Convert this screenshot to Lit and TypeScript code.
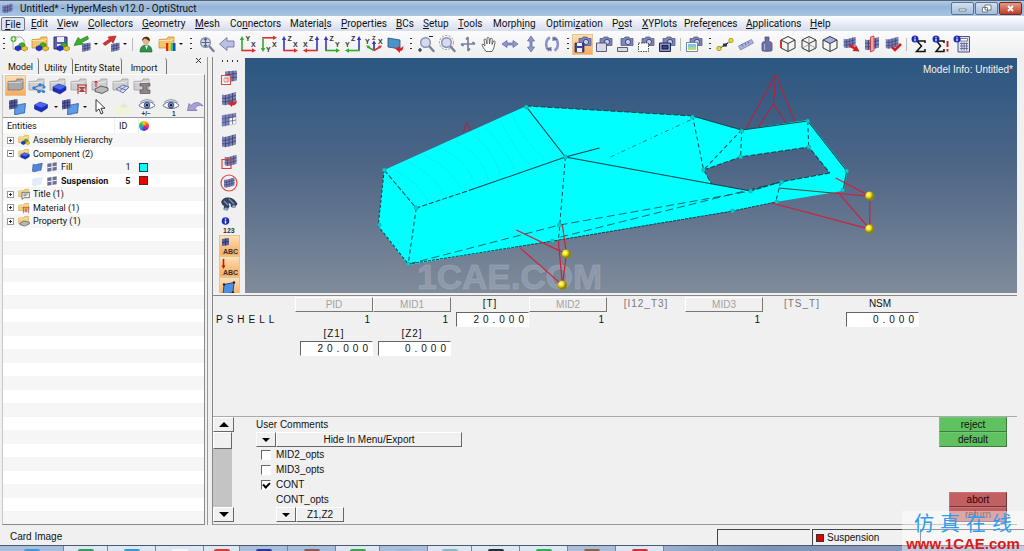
import { LitElement, html, css, svg, nothing } from "lit";
import { customElement, property, state } from "lit/decorators.js";
import { classMap } from "lit/directives/class-map.js";

/* ---------- icon building blocks, all on an 18 x 18 canvas ---------- */

const folder = (fill: string, edge: string) => svg`
  <path d="M1 4.500 9 4 10 2h6v9.500L13 13H1z" fill=${fill} stroke=${edge} stroke-width=".7"/>
  <path d="M1 5.500h12l3-2" fill="none" stroke="#fff" stroke-opacity=".6" stroke-width=".8"/>`;
const blocks = svg`
  <path d="M9 9l3-1.500L15 9v2l-3 1.500L9 11z" fill="#3fae2a" stroke="#1c6a12" stroke-width=".5"/>
  <path d="M5 12l3-1.500 3 1.500v2.500L8 16l-3-1.500z" fill="#1f36d6" stroke="#0a1578" stroke-width=".5"/>
  <path d="M11.500 12.500l3-1.500 3 1.500v2l-3 1.500-3-1.500z" fill="#e8c52a" stroke="#6a5a10" stroke-width=".5"/>`;
const cubeBlue = svg`
  <path d="M4 10l5.500-3L17 9.500v3.500l-6 4-7-3z" fill="#1a2fc0" stroke="#0b1670" stroke-width=".5"/>
  <path d="M4 10l5.500-3L17 9.500l-6 3.300z" fill="#4c66ee"/>`;
const mesh = svg`
  <path d="M2 4.500c4 1.500 9-1.500 14-2.500v10.500c-5 1-10 4-14 2z" fill="#7c83b8"/>
  <path d="M5.500 5v10M9 4v10.500M12.500 3v10.500M2 8c4 1.500 9-1.500 14-2.500M2 11.500C6 13 11 10 16 9" fill="none" stroke="#3a3e6c" stroke-width=".8"/>`;
const smallMesh = svg`
  <path d="M9 9l8.500-1.500v7.500L9 17z" fill="#7c83b8"/>
  <path d="M11.800 8.600v7.700M14.700 8v7.600M9 11.500l8.500-1.600M9 14.200l8.500-1.700" fill="none" stroke="#3a3e6c" stroke-width=".7"/>`;
const camera = svg`
  <path d="M5 3.500h3l1-1.500h4l1 1.500h3v7H5z" fill="#7f86b8" stroke="#4b5082" stroke-width=".7"/>
  <circle cx="12" cy="7" r="2.600" fill="#c9cfee" stroke="#2f3566" stroke-width=".8"/>`;
const lens = svg`
  <path d="M12 11l4.500 5" stroke="#7b7f9c" stroke-width="2.400" stroke-linecap="round"/>
  <circle cx="8.500" cy="7.500" r="4.800" fill="#d4daf0" stroke="#8a8fae" stroke-width="1.400"/>`;
const info = svg`
  <circle cx="4" cy="4" r="3.500" fill="#1b2bb4"/>
  <path d="M4 1.800v1M4 3.600v2.600" stroke="#fff" stroke-width="1.200"/>`;
const sheet = svg`<path d="M3 5c3 1.500 8-1 14-1.500L15 14c-5 .5-10 3-13 1.500z" fill="#4f86d8" stroke="#1f3f86" stroke-width=".7"/>`;
const cubeWire = svg`<path d="M9 1.500l7 3.500v8l-7 3.500L2 13V5zM2 5l7 3.500L16 5M9 8.500v8" fill="none" stroke="#333" stroke-width="1"/>`;
const eye = svg`
  <path d="M1 7.500C4 2.500 14 2.500 17 7.500 13 11.500 5 11.500 1 7.500z" fill="#fff" stroke="#5c6484" stroke-width="1"/>
  <circle cx="9" cy="7.200" r="2.900" fill="#6f8fc4" stroke="#2a3a66" stroke-width=".7"/><circle cx="9" cy="7.200" r="1.100" fill="#111"/>
  <path d="M2 4.500C6 .8 12 .8 16 4.500" fill="none" stroke="#6a7190" stroke-width=".8"/>`;
const glyph = (x: number, y: number, t: string, size = 7) =>
  svg`<text x=${x} y=${y} font-size=${size} font-weight="bold" fill="#333" font-family="Liberation Sans, sans-serif">${t}</text>`;
const G = "#2faa35", R = "#dd2f2f", B = "#3338b8";
/* upright axis on the left or right edge, second axis along the bottom */
const axes = (vert: string, horiz: string, a: string, b: string, flip = false) => svg`
  <g transform=${flip ? "translate(18 0) scale(-1 1)" : ""}>
    <path d="M3 15.500V4" stroke=${vert} stroke-width="1.600"/><path d="M.8 5L3 1l2.200 4z" fill=${vert}/>
    <path d="M2.300 15.500H14" stroke=${horiz} stroke-width="1.600"/><path d="M13 13.300l4 2.200-4 2.200z" fill=${horiz}/>
  </g>${flip ? svg`${glyph(1, 12, b)}${glyph(7, 6, a)}` : svg`${glyph(6.5, 6, a)}${glyph(12, 12, b)}`}`;

const ICONS: Record<string, unknown> = {
  app: svg`${mesh}`,
  newModel: svg`<path d="M3 2h8l3 3v9H3z" fill="#fafafa" stroke="#999" stroke-width=".8"/><circle cx="3.500" cy="4" r="3" fill="#58b843"/><path d="M3.500 2.200v3.600M1.700 4h3.600" stroke="#fff"/>${blocks}`,
  openModel: svg`${folder("#f3c568", "#c08a2a")}${blocks}`,
  saveModel: svg`<path d="M2 2h13v12H2z" fill="#5b62a8" stroke="#30356e"/><path d="M5 2h7v5H5zM5 9h7v5H5z" fill="#eef"/>${blocks}`,
  importFile: svg`${smallMesh}<path d="M14.500 1L7.500 4.500 5 2.500 1 10.500l9.500-1.500L8.500 7.500 15.500 4z" fill="#3fae2a" stroke="#1e7614" stroke-width=".6"/>`,
  exportFile: svg`${smallMesh}<path d="M1 8.500l6.500-4.500L6 2 14 1l-3 7-1.500-2L3 10.500z" fill="#dd3030" stroke="#8c1616" stroke-width=".6"/>`,
  user: svg`<path d="M3 17c0-5 2.500-7 6-7s6 2 6 7z" fill="#2c9448" stroke="#17602b" stroke-width=".6"/><circle cx="9" cy="6" r="3.600" fill="#e2b48a"/><path d="M5 6c0-6 8.500-5.500 8 0-2-.5-4-2.500-5-2.500S6 5 5 6z" fill="#4a2a14"/><path d="M8 10.500l1.500 4 1.500-4z" fill="#fff"/>`,
  colorFolder: svg`${folder("#f3c568", "#c08a2a")}<path d="M8 8h2.500v8H8z" fill="#d22"/><path d="M10.500 8h2.300v8h-2.300z" fill="#ec2"/><path d="M12.800 8H15v8h-2.200z" fill="#2c8"/><path d="M15 8h2.500v8H15z" fill="#24c"/>`,
  fit: svg`${lens}<path d="M8.500 3.500v8M4.500 7.500h8M7 5l1.500-1.500L10 5M7 10l1.500 1.500L10 10" fill="none" stroke="#5c6180" stroke-width="1.100"/>`,
  back: svg`<path d="M1.500 9L9 2.500v3.500h7v6H9v3.500z" fill="#b9c0e4" stroke="#6f77ac" stroke-width=".9"/>`,
  xy: axes(G, R, "Y", "X"),
  xyDown: svg`<path d="M3 3.500V14" stroke=${G} stroke-width="1.600"/><path d="M.8 13L3 17l2.200-4z" fill=${G}/><path d="M2.300 2.800H14" stroke=${R} stroke-width="1.600"/><path d="M13 .6l4 2.200L13 5z" fill=${R}/>${glyph(12, 12, "X")}${glyph(6, 17, "Y")}`,
  xz: axes(B, R, "Z", "X"), xzFlip: axes(B, R, "Z", "X", true),
  yz: axes(B, G, "Z", "Y"), yzFlip: axes(B, G, "Z", "Y", true),
  iso: svg`<path d="M9 15V7" stroke=${B} stroke-width="1.700"/><path d="M6.800 9L9 5.500 11.200 9z" fill=${B}/><path d="M9 15.500l-6-3.500" stroke=${G} stroke-width="1.700"/><path d="M1 10.500l4 .3-2 3z" fill=${G}/><path d="M9 15.500l6-3.500" stroke=${R} stroke-width="1.700"/><path d="M17 10.500l-4 .3 2 3z" fill=${R}/>${glyph(0, 9, "Y", 7)}${glyph(7, 5, "Z", 6)}${glyph(13, 9, "X", 7)}`,
  viewRed: svg`<path d="M2 3l12 2v9L2 12z" fill="#4f92c8" stroke="#22507c" stroke-width=".8"/><path d="M9 13.500l5-2.500v2c3-.5 3-2 3-3 1 4-1 6-3 6v2z" fill="#d82626"/>`,
  zoomPlus: svg`${lens}<path d="M12 1.500h4M1 15h4M3 13v4" stroke="#222" stroke-width="1.200"/>`,
  zoomArea: svg`${lens}<circle cx="8.500" cy="7.500" r="7" fill="none" stroke="#777" stroke-width=".8" stroke-dasharray="2 1.500"/>`,
  cross: svg`<path d="M9 2v14M2 9h14M9 2l-2 2.500M9 16l2-2.500M2 9l2.500 2M16 9l-2.500-2" stroke="#7a7f9c" stroke-width="1.700" fill="none"/>`,
  hand: svg`<path d="M6 16.500C4 13.500 2 11 2 9.500c1.200-1 2.500.8 3 1.500L4 4.500c1.200-1 2 .3 2.400 1.500L7 9V3c1-1.200 2-.4 2.200.5L9.500 9l.8-5.500c1.200-.8 2 0 2 1L12 9.500l1.500-3.500c1.300-.5 1.800.5 1.500 1.500-1 4-1 6.500-3 9z" fill="#fdfdfd" stroke="#555" stroke-width=".9"/>`,
  arrowsH: svg`<path d="M1 9l5-3.500V8h6V5.500L17 9l-5 3.500V10H6v2.500z" fill="#8f97cc" stroke="#666da8" stroke-width=".8"/>`,
  arrowsV: svg`<path d="M9 1l3.500 5H10v6h2.500L9 17l-3.500-5H8V6H5.500z" fill="#8f97cc" stroke="#666da8" stroke-width=".8"/>`,
  rotate: svg`<path d="M7 2.500C2 5 2 13 6.500 15.500M11 2.500c5 2.500 5 10.500.5 13" fill="none" stroke="#8b93c6" stroke-width="2.600"/><path d="M3 13.500l5.500 3V12zM15 4.500l-5.500-3V6z" fill="#666da8"/>`,
  camSave: svg`${camera}<path d="M1 8h9v9H1z" fill="#3c4392" stroke="#23286a" stroke-width=".7"/><path d="M3 8h5v3H3zM3 13h5v4H3z" fill="#eef"/>`,
  camWin: svg`${camera}<path d="M1.500 8h10v8.500h-10z" fill="#d9dbe4" stroke="#4a4e68" stroke-width=".9"/>`,
  camBar: svg`${camera}<path d="M1.500 12.500h10v4h-10z" fill="#d9dbe4" stroke="#4a4e68" stroke-width=".9"/>`,
  camDash: svg`${camera}<path d="M1.500 8h10v8.500h-10z" fill="#fff" stroke="#333" stroke-width=".9" stroke-dasharray="1.500 1"/>`,
  camFrame: svg`${camera}<path d="M1.500 8h11v8.500h-11z" fill="#8d95c6" stroke="#23285a"/><path d="M4 10.500h6v3.500H4z" fill="#3a4394" stroke="#111" stroke-width=".8"/>`,
  camImage: svg`${camera}<path d="M1.500 7.500h11v9h-11z" fill="#fff" stroke="#5a7aa0" stroke-width=".9"/><path d="M3 9h8v3H3z" fill="#7cc4ee"/><path d="M3 12h8v3H3z" fill="#b8dc6a"/>`,
  nodes: svg`<path d="M3 13.500L9 10l5.500-4" stroke="#222" stroke-width="1.200" stroke-dasharray="3 1"/><circle cx="3" cy="13.500" r="2.200" fill="#e6dc2a" stroke="#7d7612" stroke-width=".6"/><circle cx="15" cy="5.500" r="2.200" fill="#e6dc2a" stroke="#7d7612" stroke-width=".6"/><path d="M7 8.500h4v3H7z" fill="#333"/>`,
  ruler: svg`<path d="M1.500 11L14.500 4.500l2 3.500-13 7z" fill="#a9b0dc" stroke="#7a81b6" stroke-width=".8"/><path d="M5 9.500l1 2M8 8l1 2M11 6.500l1 2" stroke="#5a6196" stroke-width=".9"/>`,
  mass: svg`<path d="M7 2h4v2.500L10.500 6C14 7 14 8 14 9v6.500c0 1-10 1-10 0V9c0-1 0-2 3.500-3L7 4.500z" fill="#6a70a6" stroke="#464b80" stroke-width=".8"/><path d="M6.500 9v6" stroke="#a9aedb" stroke-width="1.200"/>`,
  cubeRed: svg`${cubeWire}<path d="M2 5v8" stroke="#d22" stroke-width="1.700"/>`,
  cubePlain: svg`${cubeWire}<path d="M2 13l7-3.500 7 3.500M9 1.500v7" stroke="#777" stroke-width=".7" fill="none"/>`,
  cubeTop: svg`<path d="M9 1.500L16 5 9 8.500 2 5z" fill="#a9b0e6"/>${cubeWire}`,
  meshArrow: svg`<g transform="scale(.85)">${mesh}</g><path d="M8 9l5 3 1-2 3.500 6.500-7-.5 1.200-1.800L7.500 12z" fill="#d32020"/>`,
  meshMid: svg`${mesh}<path d="M7.500 2l3.500-1v14.500L7.500 17z" fill="#f0a6aa" stroke="#cc2c33" stroke-width=".8"/>`,
  meshCheck: svg`<g transform="scale(.9)">${mesh}</g><path d="M8 12l3 3 6-6" fill="none" stroke="#cc2222" stroke-width="2.600"/>`,
  sigma: svg`<path d="M14 8V6H6l4.500 5-5 5.500H14v-2.500" fill="none" stroke="#111" stroke-width="1.500"/>${info}`,
  sigmaBang: svg`<path d="M12 8V6H4.500l4 5L4 16.500h8v-2.500" fill="none" stroke="#111" stroke-width="1.500"/><path d="M15.500 6v6M15.500 14v2.500" stroke="#d01c1c" stroke-width="1.900"/>${info}`,
  calc: svg`<path d="M5 1.500h11.500v15.500H5z" fill="#dfe1f0" stroke="#4c5280"/><path d="M7 3.500h7.500v2.500H7z" fill="#fff" stroke="#4c5280" stroke-width=".7"/><path d="M7 8.500h8M7 11h8M7 13.500h8M8.800 7.500v8M11.200 7.500v8M13.600 7.500v8" stroke="#5a608e" stroke-width=".8"/>${info}`,

  folderGray: folder("#a9a9a9", "#6e6e6e"),
  folderTree: svg`${folder("#cfcfcf", "#999")}<path d="M6 11l6-3M6 11l5 3M12 8h4M11 14h4" stroke="#2b5ba8" stroke-width="1"/><g fill="#2f7fe0"><circle cx="6" cy="11" r="1.800"/><circle cx="12" cy="8" r="1.800"/><circle cx="16" cy="10" r="1.600"/><circle cx="11" cy="14.500" r="1.800"/><circle cx="15.500" cy="14.500" r="1.600"/></g>`,
  folderCube: svg`${folder("#cfcfcf", "#999")}${cubeBlue}`,
  folderMat: svg`${folder("#cfcfcf", "#999")}<path d="M7 8h10M8 8v9M16 8v9M10 10.500h4l-4 4h4z" fill="#fff" stroke="#b33a3a" stroke-width="1.100"/>`,
  folderProp: svg`${folder("#cfcfcf", "#999")}<path d="M4 12l6-3 7 2v2.500l-6 3-7-2z" fill="#b9b9b9" stroke="#444" stroke-width=".8"/><path d="M5 4v6M5 4l-1.500 2M5 4l1.500 2" stroke="#c22" stroke-width="1"/>`,
  folderNet: svg`${folder("#cfcfcf", "#999")}<path d="M4 12l7-4 6 2-6 6zM7 10.500l7 2.500M8 13.500l6-4.500" fill="#d5daf0" stroke="#6d78ae" stroke-width="1"/>`,
  folderBeam: svg`${folder("#cfcfcf", "#999")}<path d="M7 6.500h10V9h-3v4h3v3.500H7V13h3V9H7z" fill="#8d8686" stroke="#5b5252" stroke-width=".7"/>`,
  sheetPair: svg`<path d="M7 7c3 .5 6-1 10.500-1.500L16.500 15c-4 0-7 2-10 1.500z" fill="#5d9be6" stroke="#1f4a94" stroke-width=".7"/><path d="M1 2.500L9.500 1v9L1 11.500z" fill="#5961a2"/><path d="M3.800 2v9M6.600 1.500v9M1 5.500L9.500 4M1 8.500L9.500 7" stroke="#262b5e" stroke-width=".7"/>`,
  cube: svg`<g transform="translate(-1.500 -3)">${cubeBlue}</g>`,
  cursor: svg`<path d="M6 1.500v12l3-2.500 2 5 2-1-2-4.700h4z" fill="#fff" stroke="#222" stroke-width=".9"/>`,
  paleSheet: svg`<path d="M2 8h14v8H2z" fill="#f1f4d4"/><path d="M6 9l4-4.500 1 2.500 3-1-2 4z" fill="#d9ecd9"/>`,
  eyePM: svg`${eye}${glyph(3.5, 17.5, "+/−", 6.5)}`,
  eyeOne: svg`${eye}${glyph(10, 17.5, "1", 6.5)}`,
  undo: svg`<path d="M1.500 12.500L3 5.500l2 2C9 3 14 4 17 8c-3-1.500-6-.5-8 2.500l2 2z" fill="#a79fd6" stroke="#7068a8" stroke-width=".7"/>`,

  meshRed: svg`<path d="M5 2.500l12-1v10l-12 2z" fill="#7c83b8"/><path d="M9 2v11M13 1.800v10.500M5 6l12-1.500M5 9.500L17 8" stroke="#3a3e6c" stroke-width=".8"/><path d="M1.500 6.500h9v9h-9z" fill="#fff" fill-opacity=".75" stroke="#d84a42" stroke-width="1.100"/><path d="M4 9h4v4H4z" fill="none" stroke="#d84a42" stroke-width=".6"/>`,
  meshSwap: svg`${mesh}<path d="M8 13.500l4-3v2c3 0 4-1 4.500-2.500.8 4-1.500 5.500-4.500 5.500v1.500z" fill="#d82626"/>`,
  meshPart: svg`<path d="M2 4.500l14-2.500v11L2 15.500z" fill="#f4f4fa" stroke="#aab" stroke-width=".6"/><path d="M2 4.500L16 2v4l-7 1.500V14l-7 1.200z" fill="#7c83b8"/><path d="M5.500 4v11M9 3.500V14M12.500 3v10M2 8l14-2.500M2 11.500L16 9" stroke="#4b507c" stroke-width=".7"/>`,
  mesh,
  meshBox: svg`<g transform="translate(3 0) scale(.85)">${mesh}</g><path d="M2 6.500h9v9H2z" fill="none" stroke="#e03a32" stroke-width="1.100"/>`,
  meshCircle: svg`<g transform="translate(2.500 2) scale(.75)">${mesh}</g><circle cx="9" cy="9" r="8" fill="none" stroke="#e0473f" stroke-width="1.200"/>`,
  binoculars: svg`<path d="M1 7c1-3 4-5 7-4.500 4-.5 8 3 9.500 6.500l-3 4-3.500-1-.500-3-2-1 1 3.500-2 4-4-1 .5-3.500L2.500 10z" fill="#34425e"/><path d="M4 6l4 4M9 4l5 5" stroke="#7d94b8" stroke-width="1.300"/><ellipse cx="6" cy="14" rx="2" ry="1.500" fill="#8aa6cc"/><ellipse cx="14" cy="11.500" rx="2" ry="1.500" fill="#8aa6cc"/>`,
  info123: svg`<circle cx="5.500" cy="5" r="3.800" fill="#1b2bb4"/><path d="M5.500 2.500v1.200M5.500 4.500v3" stroke="#fff" stroke-width="1.400"/>${glyph(3, 17, "123", 7)}`,
  meshAbc: svg`<path d="M2 2l7-1v7l-7 1z" fill="#5961a2"/><path d="M5.500 1.500v7M2 5.500l7-1" stroke="#23285a" stroke-width=".8"/>${glyph(3, 17, "ABC", 7)}`,
  pinAbc: svg`<path d="M3.500 1v8" stroke="#c11" stroke-width="1.600"/><path d="M1.500 7.500h4l-2 3.500z" fill="#c11"/>${glyph(3, 17, "ABC", 7)}`,
  sheetNodes: svg`<path d="M4 5.500l10-2-1 10-10 2z" fill="#4d8fe4" stroke="#1f3f86" stroke-width=".9"/><g fill="#222"><circle cx="4" cy="5.500" r="1.200"/><circle cx="14" cy="3.500" r="1.200"/><circle cx="13" cy="13.500" r="1.200"/></g>`,

  tAssembly: svg`${folder("#f3d27c", "#c39a3c")}${blocks}`,
  tComponent: svg`${folder("#f3d27c", "#c39a3c")}${cubeBlue}`,
  tTitle: svg`${folder("#f3d27c", "#c39a3c")}<path d="M6 6.500h11v8H9l-3 2.500z" fill="#fff" stroke="#333"/><path d="M8 9h7M8 11.500h5" stroke="#333"/>`,
  tMaterial: svg`${folder("#f3d27c", "#c39a3c")}<path d="M7 8h10M8 8v9M16 8v9M10 10.500h4l-4 4h4z" fill="#fff" stroke="#b33a3a" stroke-width="1.100"/>`,
  tProperty: svg`${folder("#f3d27c", "#c39a3c")}<path d="M3 12l6-3 8 2v2.500l-7 3-7-2z" fill="#b9b9b9" stroke="#444" stroke-width=".9"/>`,
  sheet,
  sheetPale: svg`<g opacity=".15">${sheet}</g>`,
  grid: svg`<path d="M2 4l14-2v12L2 16z" fill="#6a6f96"/><path d="M9 3v12M2 10l14-2" stroke="#f4f4f4" stroke-width="1.600"/>`,
};

const icon = (name: string, cls = "ico") =>
  html`<svg class=${cls} viewBox="0 0 18 18" aria-hidden="true">${ICONS[name]}</svg>`;

/* "|" separator, ":" grip, "v" drop arrow; a leading "*" marks a pressed button */
const TOOLBAR = (
  ": newModel openModel saveModel importFile v exportFile v | user colorFolder v :2 fit back xy xyDown xz xzFlip yz yzFlip iso viewRed " +
  ":2 zoomPlus zoomArea cross hand arrowsH arrowsV rotate :2 *camSave camWin camBar camDash camFrame | camImage " +
  ":2 nodes ruler mass cubeRed cubePlain cubeTop meshArrow meshMid meshCheck | sigma sigmaBang calc"
).split(" ");
const BROWSER_ROW1 = "*folderGray folderTree folderCube folderMat folderProp folderNet folderBeam".split(" ");
const BROWSER_ROW2 = "sheetPair cube v sheetPair v cursor paleSheet eyePM eyeOne undo".split(" ");
const SIDE = "meshRed meshSwap meshPart mesh meshBox meshCircle binoculars info123 *meshAbc *pinAbc *sheetNodes".split(" ");

const MENUS = ["&File", "&Edit", "&View", "&Collectors", "&Geometry", "&Mesh", "Co&nnectors", "Materia&ls",
  "&Properties", "&BCs", "&Setup", "&Tools", "Morph&ing", "Optimi&zation", "P&ost", "&XYPlots",
  "Prefe&rences", "&Applications", "&Help"];

const toolStyles = css`
  button {
    font: inherit;
    color: inherit;
    border: 0;
    padding: 0;
    margin: 0;
    background: none;
  }
  .tool {
    display: grid;
    place-items: center;
    box-sizing: border-box;
    width: 21px;
    height: 21px;
    flex: none;
    overflow: hidden;
  }
  .tool.on {
    background: linear-gradient(#fde0b4, #f9a95c);
    border: 1px solid #e5c49a;
  }
  .ico {
    width: 18px;
    height: 18px;
    display: block;
    flex: none;
  }
  .drop {
    width: 8px;
    height: 21px;
    display: grid;
    place-items: center;
    flex: none;
  }
  .drop::after {
    content: "";
    border: 2px solid transparent;
    border-top-color: #111;
    border-bottom: 0;
  }
`;

const tool = (name: string) => {
  if (name === "v") return html`<button class="drop" aria-label="More"></button>`;
  if (name === "|") return html`<span class="sep"></span>`;
  if (name.startsWith(":")) return html`<span class=${classMap({ grip: true, wide: name === ":2" })}></span>`;
  const on = name.startsWith("*");
  const id = on ? name.slice(1) : name;
  return html`<button class=${classMap({ tool: true, on })} aria-label=${id}>${icon(id)}</button>`;
};

@customElement("menu-bar")
class MenuBar extends LitElement {
  static styles = css`
    :host {
      display: block;
      background: linear-gradient(#fdfeff, #e4e9f5 60%, #d6dcec);
      font: 10px/15px Roboto, "Open Sans", sans-serif;
      color: #111;
    }
    .bar {
      display: grid;
      grid-template-columns: 26px 26px 31px 54px 53px 35px 60px 51px 55px 27px 35px 35px 53px 66px 30px 42px 62px 64px 30px;
      height: 15px;
    }
    button {
      font: inherit;
      color: inherit;
      background: none;
      border: 0;
      padding: 0 0 0 5px;
      text-align: left;
      white-space: nowrap;
    }
    .open {
      margin: 1px 1px 0;
      padding-left: 3px;
      border: 1px solid #6f7685;
      border-radius: 2px;
      line-height: 11px;
      background: #dfe4ee;
    }
  `;
  render() {
    return html`<nav class="bar">${MENUS.map((m, i) => {
      const [a, b] = m.split("&");
      return html`<button class=${classMap({ open: i === 0 })}>${a}<u>${b[0]}</u>${b.slice(1)}</button>`;
    })}</nav>`;
  }
}

@customElement("model-browser")
class ModelBrowser extends LitElement {
  @state() private tab = "Model";

  static styles = [toolStyles, css`
    :host {
      display: flex;
      flex-direction: column;
      min-height: 0;
      font: 9px/12px Roboto, "Liberation Sans", sans-serif;
      color: #111;
    }
    .tabs {
      display: grid;
      grid-template-columns: 36px 34px 49px 45px 1fr;
      height: 17px;
      padding-left: 3px;
    }
    .tab {
      border-right: 1px solid #777;
      border-top-right-radius: 3px;
      padding-top: 3px;
      margin-top: 1px;
      white-space: nowrap;
    }
    .tab.sel { padding-top: 2px; }
    .close {
      justify-self: end;
      align-self: start;
      width: 12px;
      height: 8px;
    }
    .close svg { display: block; width: 8px; height: 8px; }
    .panel {
      flex: 1;
      display: flex;
      flex-direction: column;
      margin: 0 2px 0 2px;
      border: 1px solid #8a8a8a;
      border-top-color: #fff;
      border-left-color: #c8c8c8;
      min-height: 0;
    }
    .row { display: flex; height: 21px; padding-left: 2px; }
    .second .tool { width: 24px; }
    .second .drop { width: 5px; }
    .tree {
      flex: 1;
      min-height: 0;
      border-top: 1px solid #999;
      background: #fff repeating-linear-gradient(#f6f6f6 0 14px, #fff 14px 27px) 0 15px;
    }
    table { width: 100%; border-collapse: collapse; table-layout: fixed; }
    th, td { padding: 0; text-align: left; line-height: 12px; white-space: nowrap; }
    th { height: 15px; background: #fff; border-right: 1px solid #eee; padding-left: 4px; font-weight: normal; }
    .num { width: 19px; }
    .tint { width: 64px; }
    .tint, .hue { padding-left: 0; }
    tbody tr { height: 13px; }
    tbody tr:nth-child(odd) { height: 14px; }
    .name { display: flex; align-items: center; height: 13px; gap: 3px; padding-left: 4px; }
    .child { padding-left: 28px; }
    .name svg { width: 12px; height: 12px; flex: none; }
    .box {
      width: 5px;
      height: 5px;
      border: 1px solid #999;
      background: linear-gradient(#333, #333) center / 3px 1px no-repeat, #fff;
      flex: none;
      margin-right: 1px;
    }
    .box.plus { background: linear-gradient(#333, #333) center / 3px 1px no-repeat, linear-gradient(#333, #333) center / 1px 3px no-repeat, #fff; }
    .bold { font-weight: bold; }
    .id { text-align: right; padding-right: 8px; }
    .swatch { display: block; width: 7px; height: 7px; border: 1px solid #333; }
    .cyan { background: #00ffff; }
    .red { background: #f00000; }
    .wheel {
      display: block;
      width: 10px;
      height: 10px;
      border-radius: 50%;
      background: conic-gradient(#ffd800, #ff5a1e, #e01c8c, #4a3ad8, #1ea0e8, #2cc04a, #ffd800);
    }
  `];

  render() {
    const group = (name: string, ic: string, open = false) => html`
      <tr><td><div class="name"><span class=${classMap({ box: true, plus: !open })}></span>${icon(ic)}<span>${name}</span></div></td><td></td><td></td></tr>`;
    const leaf = (name: string, id: string, color: string, ic: string, bold = false) => html`
      <tr class=${bold ? "bold" : nothing}><td><div class="name child">${icon(ic)}${icon("grid")}<span>${name}</span></div></td>
        <td class="id">${id}</td><td class="hue"><span class="swatch ${color}"></span></td></tr>`;
    return html`
      <div class="tabs" role="tablist">
        ${["Model", "Utility", "Entity State", "Import"].map((t) => html`
          <button role="tab" aria-selected=${this.tab === t} class=${classMap({ tab: true, sel: this.tab === t })}
            @click=${() => (this.tab = t)}>${t}</button>`)}
        <button class="close" aria-label="Close"><svg viewBox="0 0 8 8"><path d="M1 1l5 5M6 1L1 6" stroke="#333" fill="none"/></svg></button>
      </div>
      <div class="panel">
        <div class="row">${BROWSER_ROW1.map(tool)}</div>
        <div class="row second">${BROWSER_ROW2.map(tool)}</div>
        <div class="tree">
          <table>
            <thead><tr><th>Entities</th><th class="num">ID</th><th class="tint"><span class="wheel"></span></th></tr></thead>
            <tbody>
              ${group("Assembly Hierarchy", "tAssembly")}
              ${group("Component (2)", "tComponent", true)}
              ${leaf("Fill", "1", "cyan", "sheet")}
              ${leaf("Suspension", "5", "red", "sheetPale", true)}
              ${group("Title (1)", "tTitle")}
              ${group("Material (1)", "tMaterial")}
              ${group("Property (1)", "tProperty")}
            </tbody>
          </table>
        </div>
      </div>`;
  }
}

@customElement("model-view")
class ModelView extends LitElement {
  static styles = css`
    :host {
      display: block;
      position: relative;
      overflow: hidden;
      background: linear-gradient(#2b5781, #4d6586 45%, #808b9a);
    }
    svg { display: block; width: 100%; height: 100%; }
    .info {
      position: absolute;
      top: 6px;
      right: 4px;
      font: 10px/12px "Liberation Sans", sans-serif;
      color: #f2f2f2;
    }
  `;
  render() {
    const joints = [[384, 170], [526, 107], [565, 157], [416, 208], [379, 225], [408, 264], [552, 241], [559, 225],
      [692, 117], [741, 131], [807, 121], [808, 147], [740, 157], [703, 170], [750, 191], [781, 182], [846, 171],
      [842, 190], [776, 202], [732, 211]];
    return html`
      <svg viewBox="245 58 771 235" preserveAspectRatio="xMidYMid slice" role="img" aria-label="Finite element model">
        <defs>
          <radialGradient id="ball" cx=".35" cy=".35"><stop offset="0" stop-color="#fffbb0"/><stop offset=".5" stop-color="#f4e61c"/><stop offset="1" stop-color="#8e850c"/></radialGradient>
        </defs>
        <g stroke="#b8203c" stroke-width="1.100" fill="none">
          <path d="M463 133l3-10 5 8M744 131l31-56 19 46M775 75l-2 29-16 24M773 104l13 20"/>
        </g>
        <path fill="#00ffff" fill-rule="evenodd" d="M384 170L526 106 692 116 741 130 807 120 847 171 842 191 775 202 732 211 552 241 408 265 378 226z
          M703 170L711 184 750 191 780 182 829 173 808 147 740 157z"/>
        <g stroke="#00c8d0" stroke-width=".5" fill="none" stroke-dasharray="1 1">
          <path d="M408 162q28 14 36 34M424 155q28 14 36 34M440 148q28 14 34 36M456 141q26 16 32 38M472 134q22 18 28 40M486 128q18 20 28 41M500 121q12 24 28 43M512 115q10 24 32 44M394 170q24 12 34 32"/>
        </g>
        <g stroke="#08474c" stroke-width="1" fill="none">
          <path d="M526 107l39 50 185 34M470 190l95-33 34-9M692 116l49 14 66-9 39 50-4 20"/>
          <path d="M384 170l-6 56 30 38" stroke-dasharray="3 2"/>
          <path d="M384 170l32 38 54-18M526 106l166 10M703 170l8 14M703 170l37-13 68-10 21 26M829 173l-49 9-30 9" stroke-dasharray="5 2"/>
          <path d="M416 208l-8 56M565 157l-7 84M692 116l11 54M741 130l-38 40M741 130l-1 27M807 121l1 26M780 182l-5 20" stroke-dasharray="4 3"/>
          <path d="M408 264l151-39 191-34M560 237l220-55" stroke-dasharray="8 4" stroke-width=".8"/>
          <path d="M408 264l144-23 180-30 43-9" stroke-dasharray="3 1"/>
          <path d="M610 157l82-38" stroke-dasharray="4 4 1 3" stroke-width=".7"/>
        </g>
        <g fill="#14c9c9" stroke="#0a9aa0" stroke-width=".5">${joints.map(([x, y]) => svg`<circle cx=${x} cy=${y} r="2"/>`)}</g>
        <text x="417" y="289" font-size="35" font-weight="bold" fill="#b4bccc" fill-opacity=".34" stroke="#b4bccc" stroke-opacity=".34" stroke-width="1" font-family="Liberation Sans, sans-serif">1CAE.COM</text>
        <g stroke="#d0203a" stroke-width="1.200" fill="none">
          <path d="M516 230l50 24M520 248l42 37-4-44M562 225l4 29-4 31M869 196l-34-18M869 196l-37-3M869 196v33l-32-37M869 229l-98-26"/>
          <path d="M778 188l54 5" stroke="#4a4a3a"/>
        </g>
        ${[[566, 254], [562, 285], [869, 196], [869, 229]].map(([x, y]) => svg`<circle cx=${x} cy=${y} r="4.600" fill="url(#ball)"/>`)}
      </svg>
      <div class="info">Model Info: Untitled*</div>`;
  }
}

@customElement("card-editor")
class CardEditor extends LitElement {
  static styles = css`
    :host {
      display: flex;
      flex-direction: column;
      min-height: 0;
      font: 10px/14px "Liberation Sans", sans-serif;
      color: #111;
    }
    button, select, input { font: inherit; color: inherit; margin: 0; border-radius: 0; box-sizing: border-box; }
    .card {
      display: grid;
      grid-template-columns: 82px repeat(8, 78px);
      grid-template-rows: 15px 15px 14px 16px;
      height: 121px;
      box-sizing: border-box;
      padding-top: 1px;
      border-top: 1px solid #888;
      align-content: start;
    }
    .key { border: 1px solid #fff; border-right-color: #777; border-bottom-color: #777; background: #f0f0f0; color: #a2a2a2; padding: 0; height: 15px; line-height: 12px; }
    .name { grid-column: 1; padding-left: 3px; letter-spacing: 4px; align-self: center; }
    .cap { text-align: center; letter-spacing: 1px; }
    .cap.plain { letter-spacing: 0; }
    .cap.dim { color: #777; }
    .val { text-align: right; padding-right: 3px; align-self: center; }
    .start { grid-column: 2; }
    .field {
      width: 73px;
      height: 15px;
      margin-left: 5px;
      padding: 0;
      border: 1px solid #fff;
      border-left-color: #666;
      border-top-color: #666;
      background: #fff;
      text-align: right;
      letter-spacing: 4px;
    }
    .lower {
      flex: 1;
      display: flex;
      border-top: 1px solid #aaa;
      border-bottom: 1px solid #999;
      min-height: 0;
      padding-bottom: 2px;
    }
    .scroll { width: 21px; display: flex; flex-direction: column; }
    .scroll .step { height: 15px; }
    .track { flex: 1; width: 19px; background: #c4c4c4; }
    .thumb { height: 17px; box-sizing: border-box; }
    .bevel { background: #f0f0f0; border: 1px solid #fff; border-right-color: #666; border-bottom-color: #666; padding: 0; box-sizing: border-box; }
    .arrow { display: grid; place-items: center; }
    .arrow::after { content: ""; border: 5px solid transparent; border-top: 5px solid #000; border-bottom: 0; }
    .arrow.up::after { border-top: 0; border-bottom: 5px solid #000; }
    .form { flex: 1; padding-left: 22px; display: flex; flex-direction: column; }
    .line { display: flex; align-items: center; height: 15px; }
    .inner { padding-left: 20px; }
    .pick { width: 20px; height: 15px; }
    .pick::after { border-width: 4px; border-top-width: 4px; }
    select { appearance: none; height: 15px; text-align-last: center; line-height: 12px; }
    .wide { width: 186px; }
    .short { width: 48px; }
    label { display: flex; align-items: center; gap: 5px; padding-left: 5px; }
    input[type="checkbox"] {
      appearance: none;
      width: 10px;
      height: 10px;
      background: #fff;
      border: 1px solid #fff;
      border-top: 1px solid #666;
      border-left: 1px solid #666;
      display: grid;
      place-items: center;
    }
    input[type="checkbox"]:checked::after {
      content: "";
      border: 2px solid #000;
      border-top: 0;
      border-right: 0;
      box-sizing: border-box;
      width: 7px;
      height: 5px;
      transform: rotate(-45deg);
    }
    .side { display: flex; flex-direction: column; align-items: flex-end; padding-right: 10px; }
    .gap { flex: 1; }
    .act { height: 15px; padding: 0; line-height: 12px; border: 1px solid; }
    .go { width: 68px; background: #5fc15f; border-color: #6fcb6f #3f7a3f #3f7a3f #6fcb6f; }
    .stop { width: 58px; background: #c25f62; border-color: #cc7275 #703a3c #703a3c #cc7275; color: #300; }
  `;

  private field(label: string, value: string) {
    return html`<input class="field" aria-label=${label} .value=${value} />`;
  }
  private check(label: string, on = false) {
    return html`<div class="line"><label><input type="checkbox" ?checked=${on} />${label}</label></div>`;
  }
  render() {
    return html`
      <div class="card">
        <button class="key start">PID</button><button class="key">MID1</button><div class="cap">[T]</div>
        <button class="key">MID2</button><div class="cap dim">[I12_T3]</div><button class="key">MID3</button>
        <div class="cap dim">[TS_T]</div><div class="cap plain">NSM</div>
        <div class="name">PSHELL</div><div class="val">1</div><div class="val">1</div>${this.field("T", "20.000")}
        <div class="val">1</div><span></span><div class="val">1</div><span></span>${this.field("NSM", "0.000")}
        <div class="cap start">[Z1]</div><div class="cap">[Z2]</div>
        <span></span><span></span><span></span><span></span><span></span><span></span>
        <span></span>${this.field("Z1", "20.000")}${this.field("Z2", "0.000")}
      </div>
      <div class="lower">
        <div class="scroll">
          <button class="bevel step arrow up" aria-label="Scroll up"></button>
          <div class="track"><div class="bevel thumb"></div></div>
          <button class="bevel step arrow" aria-label="Scroll down"></button>
        </div>
        <div class="form">
          <div class="line">User Comments</div>
          <div class="line"><span class="bevel pick arrow"></span><select class="bevel wide" aria-label="User Comments"><option>Hide In Menu/Export</option></select></div>
          ${this.check("MID2_opts")}${this.check("MID3_opts")}${this.check("CONT", true)}
          <div class="line inner">CONT_opts</div>
          <div class="line inner"><span class="bevel pick arrow"></span><select class="bevel short" aria-label="CONT_opts"><option>Z1,Z2</option></select></div>
        </div>
        <div class="side">
          <button class="act go">reject</button><button class="act go">default</button>
          <span class="gap"></span>
          <button class="act stop">abort</button><button class="act stop">return</button>
        </div>
      </div>`;
  }
}

@customElement("task-strip")
class TaskStrip extends LitElement {
  @property({ attribute: false }) items: [number, string, string][] = [
    [64, "", "#3d9ad8"], [44, "lit", "#2f9e62"], [48, "lit", "#2c9cd0"], [48, "lit", "#f2f6fa"], [36, "lit", "#d83a34"],
    [48, "", "#2a3a9a"], [48, "", "#8a5a52"], [44, "lit", "#3aa648"], [48, "", "#9db4d2"], [44, "lit", "#8ab8c8"],
    [48, "lit", "#222c34"], [48, "lit", "#2fae4c"], [48, "", "#8a6048"], [48, "lit", "#cc3038"]];
  static styles = css`
    :host { display: flex; background: linear-gradient(90deg, #a9bedc 60%, #7f93b8 75%, #92a4c4); border-top: 1px solid #4c5a70; overflow: hidden; }
    .item { display: flex; justify-content: center; align-items: flex-end; box-sizing: border-box; border-right: 1px solid #7287a8; }
    .lit { background: #dce7f3; }
    .dot { width: 16px; height: 2px; border-radius: 6px 6px 0 0; }
  `;
  render() {
    return this.items.map(([w, cls, c]) => html`<div class="item ${cls}" style="width:${w}px"><span class="dot" style="background:${c}"></span></div>`);
  }
}

@customElement("app-root")
class AppRoot extends LitElement {
  static styles = [toolStyles, css`
    :host {
      display: flex;
      flex-direction: column;
      position: relative;
      height: 100vh;
      min-height: 420px;
      overflow: hidden;
      background: #f0f0f0;
      font: 10px/14px "Liberation Sans", sans-serif;
      color: #111;
    }
    .title {
      display: flex;
      align-items: center;
      height: 16px;
      flex: none;
      box-sizing: border-box;
      padding: 0 2px 0 1px;
      border-top: 1px solid #55657a;
      background: linear-gradient(#b4cae4, #94b4d8 40%, #a9c5e4);
      font: 10px/14px Roboto, "Open Sans", sans-serif;
    }
    .title .ico { width: 13px; height: 13px; margin-right: 6px; }
    .title .caption { flex: 1; white-space: nowrap; }
    .win {
      width: 23px;
      height: 13px;
      margin-left: 1px;
      border: 1px solid #5c728e;
      border-radius: 2px;
      background: linear-gradient(#d4e1f0, #a4bdd9);
      display: grid;
      place-items: center;
    }
    .win svg { width: 11px; height: 9px; }
    .exit { background: linear-gradient(#e29a8a, #c23c26); border-color: #6b2a22; }
    .tools {
      display: flex;
      align-items: center;
      height: 26px;
      flex: none;
      background: linear-gradient(#fbfbfb, #efefef);
    }
    .grip { width: 8px; height: 16px; flex: none; background: radial-gradient(circle, #333 1px, transparent 1px) 2px 0 / 4px 5px repeat-y; }
    .grip.wide { width: 10px; background-position-x: 4px; }
    .sep { width: 6px; height: 13px; flex: none; background: linear-gradient(#bbb, #bbb) center / 1px 100% no-repeat; }
    .body { flex: 1; display: flex; min-height: 0; }
    model-browser { width: 207px; flex: none; }
    .main {
      flex: 1;
      display: flex;
      flex-direction: column;
      min-width: 0;
      margin-left: 4px;
      padding-right: 7px;
      border-left: 1px solid #888;
    }
    .split { width: 1px; background: #999; flex: none; }
    .upper { flex: 1; display: flex; min-height: 0; }
    .side {
      width: 32px;
      display: flex;
      flex-direction: column;
      align-items: center;
      overflow: hidden;
    }
    .dots { width: 18px; height: 10px; flex: none; background: radial-gradient(circle, #333 1px, transparent 1px) 0 2px / 5px 4px repeat-x; }
    model-view { flex: 1; margin-top: 1px; }
    card-editor { height: 230px; flex: none; margin-top: 2px; }
    .status { display: flex; height: 20px; flex: none; box-sizing: border-box; padding-top: 4px; align-items: stretch; }
    .msg { flex: 1; padding: 1px 0 0 10px; }
    .cell {
      width: 93px;
      box-sizing: border-box;
      margin-right: 2px;
      border-top: 1px solid #444;
      border-left: 1px solid #444;
      display: flex;
      align-items: center;
      gap: 3px;
      padding-left: 3px;
    }
    .cell.mid { width: 106px; }
    .cell.end { width: 104px; margin: 0; }
    .red { width: 6px; height: 6px; background: #e00000; border: 1px solid #333; }
    task-strip { height: 5px; flex: none; }
    .stamp {
      position: absolute;
      right: 0;
      bottom: 0;
      width: 122px;
      height: 40px;
      background: rgba(255, 255, 255, .45);
      text-align: center;
      white-space: nowrap;
    }
    .cn { font: 20px/24px "Noto Sans CJK SC", sans-serif; color: #2f9df0; letter-spacing: 6px; padding-left: 6px; }
    .url { font: bold 15px/17px "Liberation Sans", sans-serif; color: #e01818; }
  `];

  render() {
    return html`
      <header class="title">
        ${icon("app")}<span class="caption">Untitled* - HyperMesh v12.0 - OptiStruct</span>
        <button class="win" aria-label="Minimize"><svg viewBox="0 0 11 9"><path d="M2 5h7v2H2z" fill="#fff" stroke="#566" stroke-width=".7"/></svg></button>
        <button class="win" aria-label="Restore"><svg viewBox="0 0 11 9"><path d="M4 1h6v5H4zM1.500 3.500h5v4.500h-5z" fill="#fff" stroke="#566" stroke-width=".8"/></svg></button>
        <button class="win exit" aria-label="Close"><svg viewBox="0 0 11 9"><path d="M3 2l5 5M8 2L3 7" stroke="#fff" stroke-width="1.800"/></svg></button>
      </header>
      <menu-bar></menu-bar>
      <div class="tools" role="toolbar">${TOOLBAR.map(tool)}</div>
      <div class="body">
        <model-browser></model-browser>
        <span class="split"></span>
        <main class="main">
          <div class="upper">
            <div class="side" role="toolbar"><span class="dots"></span>${SIDE.map(tool)}</div>
            <model-view></model-view>
          </div>
          <card-editor></card-editor>
        </main>
      </div>
      <footer class="status">
        <span class="msg">Card Image</span>
        <span class="cell"></span>
        <span class="cell mid"><span class="red"></span>Suspension</span>
        <span class="cell end"></span>
      </footer>
      <task-strip></task-strip>
      <div class="stamp"><div class="cn">仿真在线</div><div class="url">www.1CAE.com</div></div>`;
  }
}
